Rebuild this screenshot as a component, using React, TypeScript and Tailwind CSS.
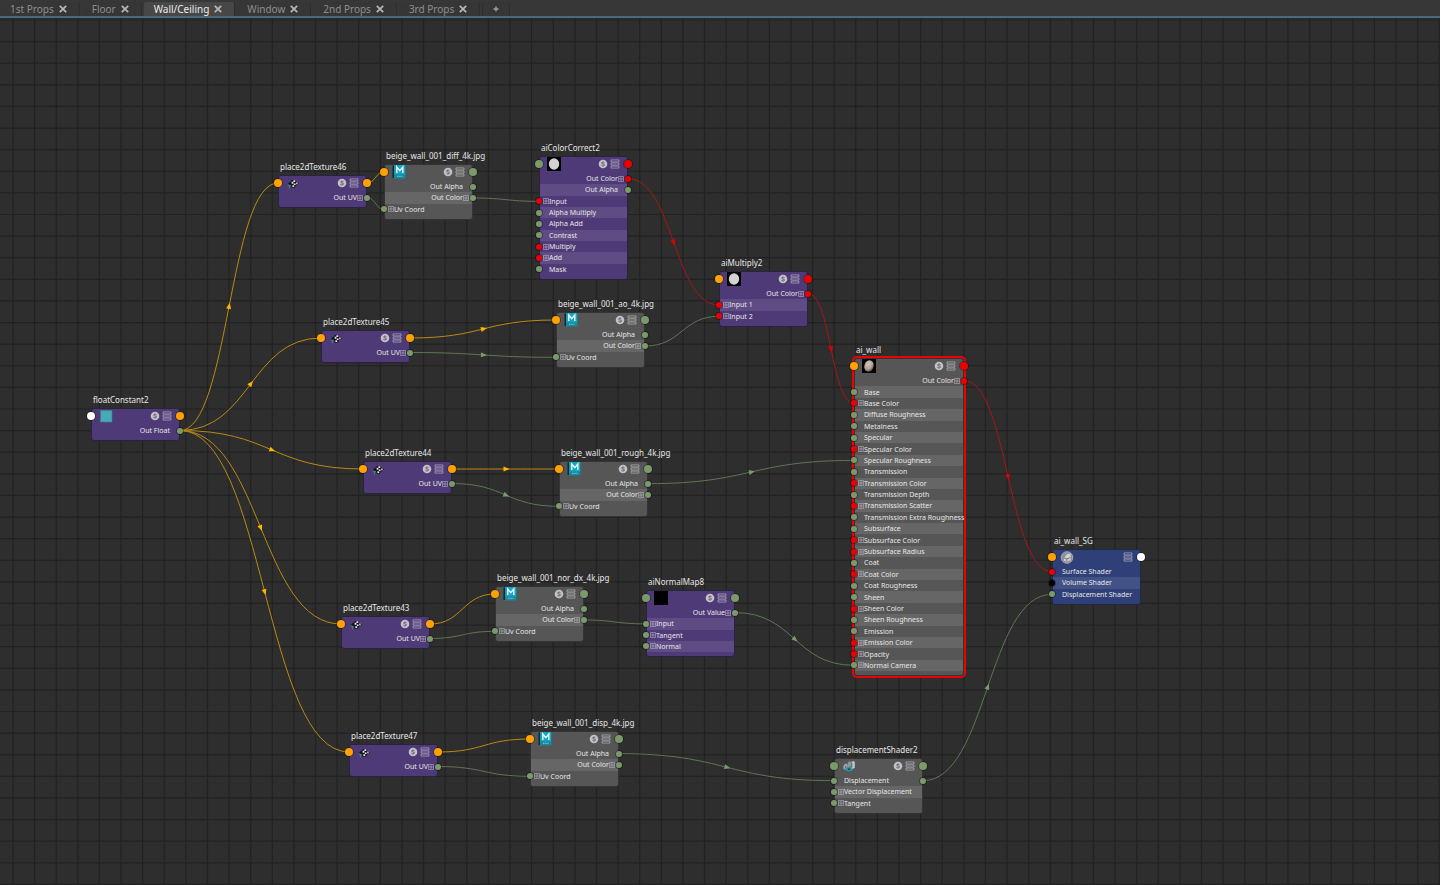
import React from "react";

type Tone = "purple" | "grey" | "blue";
type PortColor = "green" | "red" | "orange" | "white" | "black";
type Thumb = "place" | "file" | "disc" | "teal" | "black" | "clay" | "group" | "displace";

interface Row {
  label: string;
  left?: PortColor;
  right?: PortColor;
  expand?: boolean;
}

interface GraphNode {
  id: string;
  title: string;
  x: number;
  y: number;
  w: number;
  tone: Tone;
  thumb: Thumb;
  left: PortColor;
  right: PortColor;
  rows: Row[];
  selected?: boolean;
  solo?: boolean;
}

const HEADER = 17;
const FOOTER = 5;
const GRID = 21.61;

const rowsHeight = (count: number) => Math.round(count * 11.37);

const placeNode = (id: string, x: number, y: number): GraphNode => ({
  id: "place" + id,
  title: "place2dTexture" + id,
  x,
  y,
  w: 89,
  tone: "purple",
  thumb: "place",
  left: "orange",
  right: "orange",
  rows: [{ label: "Out UV", right: "green", expand: true }],
});

const fileNode = (id: string, kind: string, x: number, y: number): GraphNode => ({
  id: "file" + id,
  title: "beige_wall_001_" + kind + "_4k.jpg",
  x,
  y,
  w: 89,
  tone: "grey",
  thumb: "file",
  left: "orange",
  right: "green",
  rows: [
    { label: "Out Alpha", right: "green" },
    { label: "Out Color", right: "green", expand: true },
    { label: "Uv Coord", left: "green", expand: true },
  ],
});

const plain = (label: string): Row => ({ label, left: "green" });
const color = (label: string): Row => ({ label, left: "red", expand: true });
const vector = (label: string): Row => ({ label, left: "green", expand: true });

const NODES: GraphNode[] = [
  {
    id: "float", title: "floatConstant2", x: 91, y: 390, w: 89, tone: "purple", thumb: "teal",
    left: "white", right: "orange", rows: [{ label: "Out Float", right: "green" }],
  },
  placeNode("46", 278, 157),
  placeNode("45", 321, 312),
  placeNode("44", 363, 443),
  placeNode("43", 341, 598),
  placeNode("47", 349, 726),
  fileNode("46", "diff", 384, 146),
  fileNode("45", "ao", 556, 294),
  fileNode("44", "rough", 559, 443),
  fileNode("43", "nor_dx", 495, 568),
  fileNode("47", "disp", 530, 713),
  {
    id: "correct", title: "aiColorCorrect2", x: 539, y: 138, w: 89, tone: "purple", thumb: "disc",
    left: "green", right: "red",
    rows: [
      { label: "Out Color", right: "red", expand: true },
      { label: "Out Alpha", right: "green" },
      color("Input"), plain("Alpha Multiply"), plain("Alpha Add"), plain("Contrast"),
      color("Multiply"), color("Add"), plain("Mask"),
    ],
  },
  {
    id: "multiply", title: "aiMultiply2", x: 719, y: 253, w: 89, tone: "purple", thumb: "disc",
    left: "orange", right: "red",
    rows: [{ label: "Out Color", right: "red", expand: true }, color("Input 1"), color("Input 2")],
  },
  {
    id: "normal", title: "aiNormalMap8", x: 646, y: 572, w: 89, tone: "purple", thumb: "black",
    left: "green", right: "green",
    rows: [
      { label: "Out Value", right: "green", expand: true },
      vector("Input"), vector("Tangent"), vector("Normal"),
    ],
  },
  {
    id: "wall", title: "ai_wall", x: 854, y: 340, w: 110, tone: "grey", thumb: "clay",
    left: "orange", right: "red", selected: true,
    rows: [
      { label: "Out Color", right: "red", expand: true },
      plain("Base"), color("Base Color"), plain("Diffuse Roughness"), plain("Metalness"),
      plain("Specular"), color("Specular Color"), plain("Specular Roughness"),
      plain("Transmission"), color("Transmission Color"), plain("Transmission Depth"),
      color("Transmission Scatter"), plain("Transmission Extra Roughness"),
      plain("Subsurface"), color("Subsurface Color"), color("Subsurface Radius"),
      plain("Coat"), color("Coat Color"), plain("Coat Roughness"),
      plain("Sheen"), color("Sheen Color"), plain("Sheen Roughness"),
      plain("Emission"), color("Emission Color"), color("Opacity"), vector("Normal Camera"),
    ],
  },
  {
    id: "displace", title: "displacementShader2", x: 834, y: 740, w: 89, tone: "grey", thumb: "displace",
    left: "green", right: "green",
    rows: [
      { label: "Displacement", left: "green", right: "green" },
      vector("Vector Displacement"), vector("Tangent"),
    ],
  },
  {
    id: "group", title: "ai_wall_SG", x: 1052, y: 531, w: 89, tone: "blue", thumb: "group",
    left: "orange", right: "white", solo: false,
    rows: [
      { label: "Surface Shader", left: "red" },
      { label: "Volume Shader", left: "black" },
      plain("Displacement Shader"),
    ],
  },
];

type EdgeColor = "yellow" | "green" | "red";
// Row -1 is the port on the node's header.
type Edge = [from: string, fromRow: number, to: string, toRow: number, color: EdgeColor];

const EDGES: Edge[] = [
  ["float", 0, "place46", -1, "yellow"],
  ["float", 0, "place45", -1, "yellow"],
  ["float", 0, "place44", -1, "yellow"],
  ["float", 0, "place43", -1, "yellow"],
  ["float", 0, "place47", -1, "yellow"],
  ["place46", -1, "file46", -1, "yellow"],
  ["place45", -1, "file45", -1, "yellow"],
  ["place44", -1, "file44", -1, "yellow"],
  ["place43", -1, "file43", -1, "yellow"],
  ["place47", -1, "file47", -1, "yellow"],
  ["place46", 0, "file46", 2, "green"],
  ["place45", 0, "file45", 2, "green"],
  ["place44", 0, "file44", 2, "green"],
  ["place43", 0, "file43", 2, "green"],
  ["place47", 0, "file47", 2, "green"],
  ["file46", 1, "correct", 2, "green"],
  ["file45", 1, "multiply", 2, "green"],
  ["file44", 0, "wall", 7, "green"],
  ["file43", 1, "normal", 1, "green"],
  ["file47", 0, "displace", 0, "green"],
  ["normal", 0, "wall", 25, "green"],
  ["displace", 0, "group", 2, "green"],
  ["correct", 0, "multiply", 1, "red"],
  ["multiply", 0, "wall", 2, "red"],
  ["wall", 0, "group", 0, "red"],
];

const LINE: Record<EdgeColor, string> = { yellow: "#b98a14", green: "#5d7556", red: "#a51616" };
const ARROW: Record<EdgeColor, string> = { yellow: "#ffb400", green: "#7b9a6c", red: "#e00000" };

const PORT: Record<PortColor, string> = {
  green: "bg-[#7a9a6a]",
  red: "bg-[#ea0000]",
  orange: "bg-[#ffa200]",
  white: "bg-white",
  black: "bg-black",
};

const BODY: Record<Tone, string> = {
  purple: "bg-[#4f3a78] border-[#2b2140]",
  grey: "bg-[#565656] border-[#343434]",
  blue: "bg-[#2f4079] border-[#1f2945]",
};

const STRIPE: Record<Tone, string> = {
  purple: "bg-[#5f4c85]",
  grey: "bg-[#666666]",
  blue: "bg-[#435286]",
};

function portY(node: GraphNode, row: number) {
  if (row < 0) return node.y + 8;
  const n = node.rows.length;
  return node.y + HEADER + ((row + 0.5) * rowsHeight(n)) / n;
}

function Port({ tone, side, large }: { tone: PortColor; side: "left" | "right"; large?: boolean }) {
  return (
    <span
      className={[
        "absolute top-1/2 z-10 -translate-y-1/2 rounded-full ring-1 ring-black/30",
        large ? "size-2" : "size-1.5",
        side === "left" ? "left-0 -translate-x-1/2" : "right-0 translate-x-1/2",
        PORT[tone],
      ].join(" ")}
    />
  );
}

function ExpandIcon() {
  return (
    <svg viewBox="0 0 6 6" className="size-1.5 shrink-0" fill="none" stroke="#c4c0cc" strokeOpacity="0.65" strokeWidth="0.8">
      <path d="M.5.5h5v5h-5zM3 1v4M1 3h4" />
    </svg>
  );
}

function ThumbIcon({ kind }: { kind: Thumb }) {
  const cls = "size-3.5 shrink-0";
  switch (kind) {
    case "teal":
      return (
        <svg viewBox="0 0 14 14" className={cls}>
          <rect x="1.5" y="1.5" width="11.5" height="11.5" fill="#48a9b5" stroke="#3a7f95" strokeWidth="0.6" />
        </svg>
      );
    case "black":
      return (
        <svg viewBox="0 0 14 14" className={cls}>
          <rect width="14" height="14" fill="#000" />
        </svg>
      );
    case "disc":
      return (
        <svg viewBox="0 0 14 14" className={cls}>
          <rect width="14" height="14" fill="#000" />
          <ellipse cx="7" cy="7" rx="5.2" ry="5.8" fill="#d2d2d2" />
        </svg>
      );
    case "clay":
      return (
        <svg viewBox="0 0 14 14" className={cls}>
          <defs>
            <radialGradient id="clay" cx="0.35" cy="0.35" r="0.75">
              <stop offset="0" stopColor="#d6c4b8" />
              <stop offset="0.6" stopColor="#b5a297" />
              <stop offset="1" stopColor="#4b403a" />
            </radialGradient>
          </defs>
          <rect width="14" height="14" fill="#000" />
          <ellipse cx="7" cy="7" rx="4.6" ry="5.8" fill="url(#clay)" transform="rotate(18 7 7)" />
        </svg>
      );
    case "file":
      return (
        <svg viewBox="0 0 14 14" className={cls}>
          <rect x="0.5" y="0.5" width="3" height="12.5" fill="#14262c" />
          <rect x="2" y="0" width="11.5" height="13.5" fill="#12899f" />
          <rect x="2.5" y="0" width="10.5" height="9.5" fill="#1aa3c0" />
          <path d="M4.8 8V2l3 3.6L10.8 2v6" fill="none" stroke="#e4fbff" strokeWidth="1.4" />
          <path d="M5 11.3h1.4M7.2 11.3h1.4M9.4 11.3h1.2" stroke="#9ad8e0" strokeWidth="0.9" />
        </svg>
      );
    case "place":
      return (
        <svg viewBox="0 0 14 14" className={cls}>
          <path d="M2 7.6l2.6-2h5.6l2.8 2-3.2 2.2H4.6z" fill="#15131a" />
          <path d="M5.4 4h4v7.6h-4z" fill="#15131a" />
          <path d="M7.4 4.2h1.8v1.8H7.4zM5.6 5.8h1.8v1.9H5.6zM7.8 7.4h1.8v1.6H7.8zM10.2 6.6h1.4v1.6h-1.4zM6.4 9.2h1.8v1.9H6.4z" fill="#e2e2e2" />
          <path d="M1.8 9.4H5M3.4 9.4v3" stroke="#2d8a8f" strokeWidth="1" />
        </svg>
      );
    case "group":
      return (
        <svg viewBox="0 0 14 14" className={cls}>
          <circle cx="7" cy="7.5" r="5.8" fill="#8d9096" stroke="#c2c4c8" strokeWidth="0.7" />
          <path d="M4 8.2l3-4 3.6-.6v6.6l-4 1.6L4 10.6z" fill="#d3d3d3" />
          <path d="M4.2 8.2l2.6.7v2.8M6.8 8.9l3.6-1.4" fill="none" stroke="#5a5d63" strokeWidth="0.8" />
        </svg>
      );
    case "displace":
      return (
        <svg viewBox="0 0 14 14" className={cls}>
          <path d="M1.4 6.4l2.2-1.8 2 1v5L3.4 11 1.4 9.8z" fill="#a4abad" />
          <path d="M5.8 3.4l1.6-1.2 1.7.9v4.2l-3.3 1z" fill="#8f999c" />
          <path d="M9.4 3l1.8-1.1 1.6.9v6L10 10.4z" fill="#c0c5c7" />
          <path d="M3.4 6.4v4M9.9 3.8v4" stroke="#4c5659" strokeWidth="0.7" />
          <path d="M3.4 9.4L5 7.6l2 .8 2-1.2 1.6 1.8-.6 2.4-3 1.2-2.8-1z" fill="#2c9fb4" />
          <ellipse cx="7" cy="10.2" rx="1.5" ry="1" fill="#174852" />
        </svg>
      );
  }
}

function SoloIcon() {
  return (
    <svg viewBox="0 0 10 10" className="size-2.5">
      <circle cx="5" cy="5" r="4.3" fill="#c3c1c8" />
      <path d="M6.5 3.7c-.5-.8-2.9-.8-2.9.3 0 1.2 2.9.7 2.9 2 0 1.2-2.5 1.2-3.1.3" fill="none" stroke="#55505f" strokeWidth="0.9" />
    </svg>
  );
}

function ModeIcon() {
  return (
    <svg viewBox="0 0 10 10" className="size-2.5" fill="none" stroke="#c3c1c8" strokeOpacity="0.75" strokeWidth="0.8">
      <path d="M1 .9h8v2H1zM1 4h8v2H1zM1 7.1h8v2H1z" />
    </svg>
  );
}

function NodeCard({ node }: { node: GraphNode }) {
  const n = node.rows.length;
  return (
    <article className="absolute" style={{ left: node.x, top: node.y, width: node.w }}>
      <h2 className="absolute bottom-full left-0 pb-0.5 pl-0.5 text-[8px] leading-3 font-normal whitespace-nowrap text-[#e6e6e6]">
        {node.title}
      </h2>
      <div
        className={[
          "relative rounded-[3px]",
          node.selected ? "outline-2 outline-[#ee0000]" : "",
        ].join(" ")}
      >
        <div className={["absolute inset-0 rounded-[3px] border", BODY[node.tone]].join(" ")} />
        <header className="relative flex h-[17px] items-start px-2">
          <span className="absolute inset-x-0 top-0 h-4">
            <Port tone={node.left} side="left" large />
            <Port tone={node.right} side="right" large />
          </span>
          <span className="flex pt-px">
            <ThumbIcon kind={node.thumb} />
          </span>
          <span className="ml-auto flex gap-0.5 pt-[3px]">
            {node.solo !== false && (
              <button type="button" aria-label={"Solo " + node.title} className="flex">
                <SoloIcon />
              </button>
            )}
            <button type="button" aria-label={"View mode of " + node.title} className="flex">
              <ModeIcon />
            </button>
          </span>
        </header>
        <ul className="relative flex flex-col" style={{ height: rowsHeight(n) }}>
          {node.rows.map((row, i) => {
            const output = !row.left;
            return (
              <li key={row.label} className="relative flex min-h-0 flex-1 px-px">
                {row.left && <Port tone={row.left} side="left" />}
                {row.right && <Port tone={row.right} side="right" />}
                <div
                  className={[
                    "flex flex-1 items-center px-[3px] text-[7px] leading-none whitespace-nowrap text-[#e6e6e6]",
                    output ? "flex-row-reverse" : "",
                    i % 2 === 1 ? STRIPE[node.tone] : "",
                  ].join(" ")}
                >
                  <span className="flex w-1.5 shrink-0">{row.expand && <ExpandIcon />}</span>
                  <span>{row.label}</span>
                </div>
              </li>
            );
          })}
        </ul>
        <div style={{ height: FOOTER }} />
      </div>
    </article>
  );
}

function Grid() {
  const lines = Array.from({ length: 180 }, (_, i) => i);
  return (
    <svg className="absolute inset-0 size-full" stroke="#222222" strokeWidth="1.2" aria-hidden="true">
      {lines.map((i) => (
        <line key={"v" + i} x1={13 + i * GRID} x2={13 + i * GRID} y1="0" y2="100%" />
      ))}
      {lines.map((i) => (
        <line key={"h" + i} x1="0" x2="100%" y1={2 + i * GRID} y2={2 + i * GRID} />
      ))}
    </svg>
  );
}

function Wires() {
  const byId = new Map(NODES.map((node) => [node.id, node]));
  return (
    <svg className="absolute inset-0 size-full" fill="none" aria-hidden="true">
      {EDGES.map(([from, fromRow, to, toRow, tone]) => {
        const a = byId.get(from)!;
        const b = byId.get(to)!;
        const x1 = a.x + a.w;
        const y1 = portY(a, fromRow);
        const x2 = b.x;
        const y2 = portY(b, toRow);
        const mx = (x1 + x2) / 2;
        const my = (y1 + y2) / 2;
        const long = Math.hypot(x2 - x1, y2 - y1) > 100;
        const angle = (Math.atan2(2 * (y2 - y1), x2 - x1) * 180) / Math.PI;
        return (
          <g key={from + fromRow + to + toRow}>
            <path d={`M${x1} ${y1}C${mx} ${y1} ${mx} ${y2} ${x2} ${y2}`} stroke={LINE[tone]} strokeWidth="1" />
            {long && (
              <path d="M-2 -2.5L4 0L-2 2.5Z" fill={ARROW[tone]} transform={`translate(${mx} ${my}) rotate(${angle})`} />
            )}
          </g>
        );
      })}
    </svg>
  );
}

const TABS = ["1st Props", "Floor", "Wall/Ceiling", "Window", "2nd Props", "3rd Props"];

function TabBar() {
  const [active, setActive] = React.useState("Wall/Ceiling");
  return (
    <nav className="flex h-[18px] items-end gap-0.5 border-b-2 border-[#4c687c] bg-[#373737] pt-0.5">
      {TABS.map((tab) => (
        <div
          key={tab}
          className={[
            "flex h-full items-center gap-[5px] rounded-t-xs border-r border-[#2e2e2e] pr-3 pl-2.5 text-[10px] leading-none",
            tab === active ? "bg-[#474747] text-[#ececec]" : "bg-[#363636] text-[#8f8f8f]",
          ].join(" ")}
        >
          <button type="button" className="leading-none" onClick={() => setActive(tab)}>
            {tab}
          </button>
          <button type="button" aria-label={"Close " + tab} className="flex">
            <svg viewBox="0 0 8 8" className="size-2" stroke="#b4b4b4" strokeWidth="1.8">
              <path d="M.8.8l6.4 6.4M7.2.8L.8 7.2" />
            </svg>
          </button>
        </div>
      ))}
      <button type="button" aria-label="Add tab" className="flex h-full w-7 items-center justify-center rounded-t-xs border-x border-[#2e2e2e] bg-[#363636]">
        <svg viewBox="0 0 6 6" className="size-1.5" stroke="#a0a0a0" strokeWidth="1.4">
          <path d="M3 .4v5.2M.4 3h5.2" />
        </svg>
      </button>
    </nav>
  );
}

export default function App() {
  return (
    <div className="flex min-h-screen flex-col bg-[#2e2e2e] font-['Noto_Sans','Open_Sans',sans-serif]">
      <TabBar />
      <main className="relative flex-1 overflow-hidden">
        <Grid />
        <Wires />
        {NODES.map((node) => (
          <NodeCard key={node.id} node={node} />
        ))}
      </main>
    </div>
  );
}
